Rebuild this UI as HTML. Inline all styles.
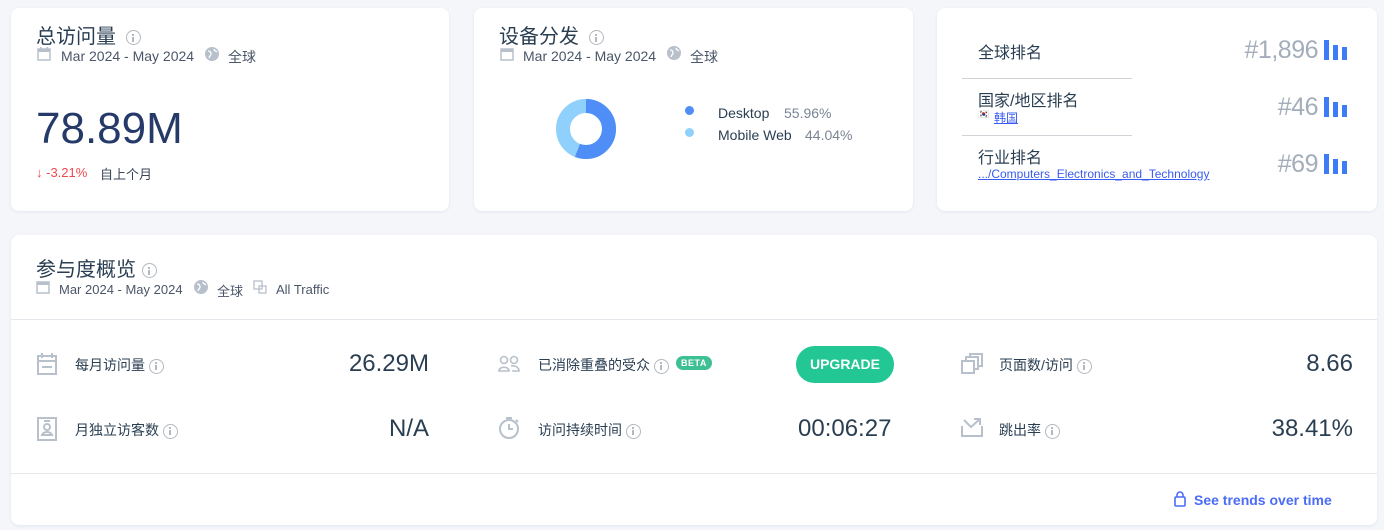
<!DOCTYPE html>
<html><head><meta charset="utf-8"><style>
*{margin:0;padding:0;box-sizing:border-box}
body{width:1384px;height:530px;background:#f4f6fa;font-family:"Liberation Sans","Noto Sans CJK SC",sans-serif;color:#2a3e52;position:relative;overflow:hidden}
.card{position:absolute;background:#fff;border-radius:8px;box-shadow:0 1px 3px rgba(30,50,90,.08)}
.a{position:absolute;white-space:nowrap}
.t{font-size:20px;color:#2a3e52}
.sub{font-size:14px;color:#4a5668}
.info{display:inline-block;width:15px;height:15px;border:1.5px solid #b4b8bf;border-radius:50%;position:relative;vertical-align:middle}
.info:before{content:"";position:absolute;left:5px;top:2.5px;width:2px;height:2px;background:#b4b8bf}
.info:after{content:"";position:absolute;left:5px;top:5.5px;width:2px;height:5px;background:#b4b8bf}
.lbl{font-size:14px;color:#2a3e52}
.val{font-size:24px;color:#2a3e52;text-align:right}
.rk{font-size:25px;color:#a3adbb;font-weight:300;text-align:right;letter-spacing:-0.5px}
.bars{position:absolute;width:23px;height:20px}
.bars i{position:absolute;bottom:0;width:5px;background:#3d7bf7}
a{color:#3a5cf0}
</style></head><body>
<!-- card1 -->
<div class="card" style="left:11px;top:8px;width:438px;height:203px">
 <div class="a t" style="left:25px;top:12px">总访问量 <span class="info" style="margin-left:4px"></span></div>
 <svg class="a" style="left:26px;top:39px" width="14" height="14"><rect x="1" y="2" width="12" height="11" fill="none" stroke="#b8c0cc" stroke-width="1.5"/><rect x="1" y="2" width="12" height="3" fill="#b8c0cc"/><rect x="3" y="0" width="1.5" height="3" fill="#b8c0cc"/><rect x="9.5" y="0" width="1.5" height="3" fill="#b8c0cc"/></svg>
 <div class="a sub" style="left:50px;top:40px">Mar 2024 - May 2024</div>
 <svg class="a" style="left:194px;top:39px" width="14" height="14"><circle cx="7" cy="7" r="7" fill="#b8c0cc"/><path d="M3 4c2 0 3 1 3 3s-2 2-2 4M9 2c0 2 2 2 3 3" stroke="#fff" stroke-width="1.3" fill="none"/></svg>
 <div class="a sub" style="left:217px;top:39px">全球</div>
 <div class="a" style="left:25px;top:96px;font-size:44px;color:#263a6a;font-weight:300">78.89M</div>
 <div class="a" style="left:25px;top:157px;font-size:13px;color:#f0484f">↓ -3.21%</div>
 <div class="a" style="left:89px;top:156px;font-size:13px;color:#3a4656">自上个月</div>
</div>
<!-- card2 -->
<div class="card" style="left:474px;top:8px;width:439px;height:203px">
 <div class="a t" style="left:25px;top:12px">设备分发 <span class="info" style="margin-left:4px"></span></div>
 <svg class="a" style="left:26px;top:39px" width="14" height="14"><rect x="1" y="2" width="12" height="11" fill="none" stroke="#b8c0cc" stroke-width="1.5"/><rect x="1" y="2" width="12" height="3" fill="#b8c0cc"/></svg>
 <div class="a sub" style="left:49px;top:40px">Mar 2024 - May 2024</div>
 <svg class="a" style="left:193px;top:38px" width="14" height="14"><circle cx="7" cy="7" r="7" fill="#b8c0cc"/><path d="M3 4c2 0 3 1 3 3s-2 2-2 4M9 2c0 2 2 2 3 3" stroke="#fff" stroke-width="1.3" fill="none"/></svg>
 <div class="a sub" style="left:216px;top:39px">全球</div>
 <svg class="a" style="left:81px;top:90px" width="62" height="62" viewBox="0 0 62 62">
  <circle cx="31" cy="31" r="23" fill="none" stroke="#8fd0fd" stroke-width="14"/>
  <circle cx="31" cy="31" r="23" fill="none" stroke="#4f8ef6" stroke-width="14" stroke-dasharray="80.87 200" transform="rotate(-90 31 31)"/>
 </svg>
 <div class="a" style="left:211px;top:98px;width:9px;height:9px;border-radius:50%;background:#4f8ef6"></div>
 <div class="a" style="left:211px;top:120px;width:9px;height:9px;border-radius:50%;background:#8fd0fd"></div>
 <div class="a" style="left:244px;top:97px;font-size:14px;color:#2a3e52">Desktop</div>
 <div class="a" style="left:310px;top:97px;font-size:14px;color:#7a8594">55.96%</div>
 <div class="a" style="left:244px;top:119px;font-size:14px;color:#2a3e52">Mobile Web</div>
 <div class="a" style="left:331px;top:119px;font-size:14px;color:#7a8594">44.04%</div>
</div>
<!-- card3 -->
<div class="card" style="left:937px;top:8px;width:440px;height:203px">
 <div class="a" style="left:41px;top:31px;font-size:16px">全球排名</div>
 <div class="a rk" style="right:59px;top:28px">#1,896</div>
 <div class="bars" style="left:387px;top:32px"><i style="left:0;height:20px"></i><i style="left:9px;height:15px"></i><i style="left:18px;height:13px"></i></div>
 <div class="a" style="left:25px;top:70px;width:170px;border-top:1px solid #cfd3d8"></div>
 <div class="a" style="left:41px;top:79px;font-size:16px">国家/地区排名</div>
 <div class="a" style="left:41px;top:101px;font-size:9px">🇰🇷</div>
 <div class="a" style="left:57px;top:101px;font-size:12px"><a href="#">韩国</a></div>
 <div class="a rk" style="right:59px;top:85px">#46</div>
 <div class="bars" style="left:387px;top:89px"><i style="left:0;height:20px"></i><i style="left:9px;height:15px"></i><i style="left:18px;height:12px"></i></div>
 <div class="a" style="left:25px;top:127px;width:170px;border-top:1px solid #cfd3d8"></div>
 <div class="a" style="left:41px;top:136px;font-size:16px">行业排名</div>
 <div class="a" style="left:41px;top:159px;font-size:12px"><a href="#">.../Computers_Electronics_and_Technology</a></div>
 <div class="a rk" style="right:59px;top:142px">#69</div>
 <div class="bars" style="left:387px;top:146px"><i style="left:0;height:20px"></i><i style="left:9px;height:15px"></i><i style="left:18px;height:13px"></i></div>
</div>
<!-- bottom -->
<div class="card" style="left:11px;top:235px;width:1366px;height:290px">
 <div class="a t" style="left:25px;top:18px">参与度概览 <span class="info" style="margin-left:0"></span></div>
 <svg class="a" style="left:25px;top:45px" width="14" height="14"><rect x="1" y="2" width="12" height="11" fill="none" stroke="#b8c0cc" stroke-width="1.5"/><rect x="1" y="2" width="12" height="3" fill="#b8c0cc"/></svg>
 <div class="a" style="left:48px;top:47px;font-size:13px;color:#4a5668">Mar 2024 - May 2024</div>
 <svg class="a" style="left:183px;top:45px" width="14" height="14"><circle cx="7" cy="7" r="7" fill="#b8c0cc"/><path d="M3 4c2 0 3 1 3 3s-2 2-2 4M9 2c0 2 2 2 3 3" stroke="#fff" stroke-width="1.3" fill="none"/></svg>
 <div class="a" style="left:206px;top:46px;font-size:13px;color:#4a5668">全球</div>
 <svg class="a" style="left:242px;top:45px" width="14" height="14"><rect x="1" y="1" width="8" height="8" fill="none" stroke="#b8c0cc" stroke-width="1.3"/><rect x="6" y="6" width="7" height="7" fill="none" stroke="#b8c0cc" stroke-width="1.3"/></svg>
 <div class="a" style="left:265px;top:47px;font-size:13px;color:#4a5668">All Traffic</div>
 <div class="a" style="left:0;top:84px;width:1366px;border-top:1px solid #e4e7eb"></div>
 <!-- row1 -->
 <svg class="a" style="left:26px;top:118px" width="20" height="22"><rect x="1" y="3" width="18" height="18" fill="none" stroke="#b8c0cc" stroke-width="2"/><path d="M1 8h18M5 0v5M15 0v5M5 14h10" stroke="#b8c0cc" stroke-width="2"/></svg>
 <div class="a lbl" style="left:64px;top:120px">每月访问量 <span class="info"></span></div>
 <div class="a val" style="right:948px;top:115px">26.29M</div>
 <svg class="a" style="left:487px;top:120px" width="22" height="18"><circle cx="6" cy="5" r="3.5" fill="none" stroke="#b8c0cc" stroke-width="1.6"/><circle cx="16" cy="5" r="3.5" fill="none" stroke="#b8c0cc" stroke-width="1.6"/><path d="M1 16c0-5 10-5 10 0zM13 11c5-1 8 2 8 5h-7" fill="none" stroke="#b8c0cc" stroke-width="1.6"/></svg>
 <div class="a lbl" style="left:527px;top:120px">已消除重叠的受众 <span class="info"></span></div>
 <div class="a" style="left:665px;top:121px;background:#3fbf94;color:#fff;font-size:9px;font-weight:bold;border-radius:8px;padding:2px 5px;letter-spacing:.5px">BETA</div>
 <div class="a" style="left:785px;top:111px;width:98px;height:37px;border-radius:19px;background:#22c794;color:#fff;font-size:14px;font-weight:bold;text-align:center;line-height:37px">UPGRADE</div>
 <svg class="a" style="left:950px;top:118px" width="22" height="22"><rect x="1" y="8" width="12" height="12" fill="none" stroke="#b8c0cc" stroke-width="2"/><path d="M5 8V4h12v12h-4M9 4V1h12v12h-4" fill="none" stroke="#b8c0cc" stroke-width="2"/></svg>
 <div class="a lbl" style="left:988px;top:120px">页面数/访问 <span class="info"></span></div>
 <div class="a val" style="right:24px;top:115px">8.66</div>
 <!-- row2 -->
 <svg class="a" style="left:26px;top:182px" width="20" height="24"><rect x="1" y="1" width="18" height="22" fill="none" stroke="#b8c0cc" stroke-width="2"/><circle cx="10" cy="10" r="3" fill="none" stroke="#b8c0cc" stroke-width="2"/><path d="M5 18c2-4 8-4 10 0zM7 4h6" stroke="#b8c0cc" stroke-width="2" fill="none"/></svg>
 <div class="a lbl" style="left:64px;top:185px">月独立访客数 <span class="info"></span></div>
 <div class="a val" style="right:948px;top:180px">N/A</div>
 <svg class="a" style="left:487px;top:181px" width="22" height="24"><circle cx="11" cy="13" r="9" fill="none" stroke="#b8c0cc" stroke-width="2"/><path d="M8 2h6M11 8v5h4M18 4l2 2" stroke="#b8c0cc" stroke-width="2" fill="none"/></svg>
 <div class="a lbl" style="left:527px;top:185px">访问持续时间 <span class="info"></span></div>
 <div class="a val" style="left:787px;top:180px">00:06:27</div>
 <svg class="a" style="left:950px;top:183px" width="22" height="20"><path d="M1 8v10h20V8M3 2l7 7 9-8M13 1h6v6" fill="none" stroke="#b8c0cc" stroke-width="2"/></svg>
 <div class="a lbl" style="left:988px;top:185px">跳出率 <span class="info"></span></div>
 <div class="a val" style="right:24px;top:180px">38.41%</div>
 <div class="a" style="left:0;top:238px;width:1366px;border-top:1px solid #e4e7eb"></div>
 <svg class="a" style="left:1163px;top:256px" width="12" height="16"><rect x="1" y="6" width="10" height="9" rx="1" fill="none" stroke="#4a6cf7" stroke-width="1.6"/><path d="M3 6V4a3 3 0 0 1 6 0v2" fill="none" stroke="#4a6cf7" stroke-width="1.6"/></svg>
 <div class="a" style="left:1183px;top:257px;font-size:14px;font-weight:bold;color:#4a6cf7">See trends over time</div>
</div>
</body></html>
